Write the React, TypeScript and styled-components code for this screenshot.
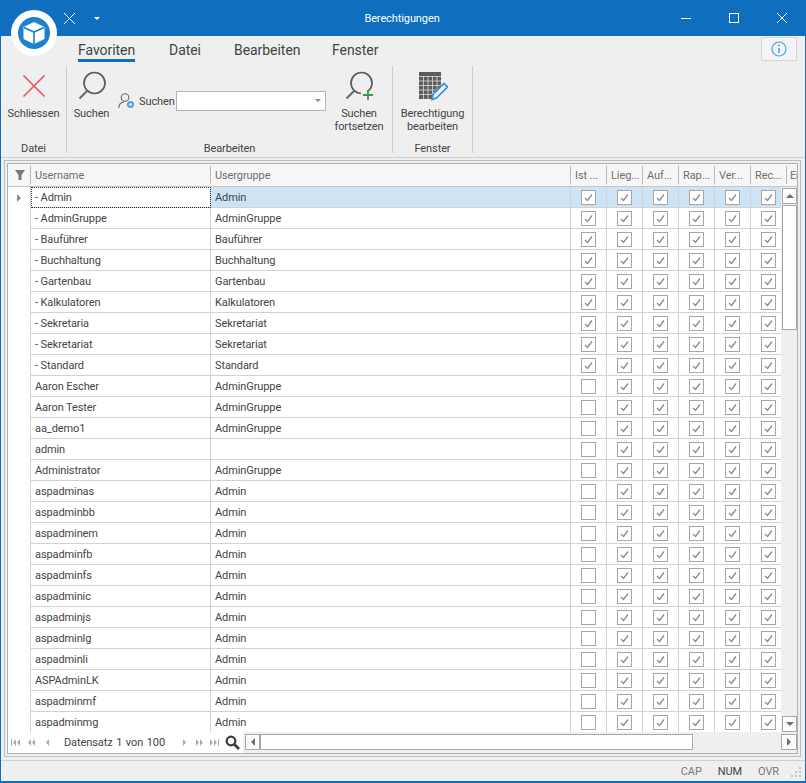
import React from "react";
import styled, { createGlobalStyle } from "styled-components";

const Global = createGlobalStyle`
  html, body { margin: 0; padding: 0; background: #efefef; }
  body { font-family: Roboto, "Noto Sans", sans-serif; font-size: 11px; letter-spacing: -0.1px; color: #444; }
  * { box-sizing: border-box; }
`;

const Win = styled.div`
  position: relative;
  width: 806px;
  height: 783px;
  display: flex;
  flex-direction: column;
  background: #efefef;
  border: 1px solid #106ebe;
  border-width: 0 1px 2px 1px;
  overflow: hidden;
`;
const TitleBar = styled.div`
  height: 36px;
  flex: none;
  background: #106ebe;
  color: #fff;
  display: grid;
  grid-template-columns: 1fr auto 1fr;
  align-items: center;
  margin: 0 -1px;
`;
const Quick = styled.div`
  display: flex;
  align-items: center;
  gap: 18px;
  padding: 0 0 0 63px;
`;
const Title = styled.div`
  text-align: center;
  padding-right: 2px;
`;
const WinBtns = styled.div`
  display: flex;
  justify-content: flex-end;
  gap: 38px;
  padding-right: 19px;
`;
const Logo = styled.div`
  position: absolute;
  left: 10px;
  top: 10px;
  width: 46px;
  height: 46px;
  border-radius: 50%;
  background: #fff;
  display: flex;
  align-items: center;
  justify-content: center;
`;
const TabsRow = styled.div`
  height: 30px;
  flex: none;
  display: flex;
  align-items: flex-start;
  padding-left: 77px;
  position: relative;
`;
const Tab = styled.div<{ $w: number; $active?: boolean }>`
  width: ${(p) => p.$w}px;
  height: 26px;
  margin-right: 34px;
  font-size: 14px;
  letter-spacing: -0.05px;
  line-height: 29px;
  color: #444;
  white-space: nowrap;
  border-bottom: 3px solid ${(p) => (p.$active ? "#106ebe" : "transparent")};
`;
const InfoBtn = styled.div`
  position: absolute;
  left: 760px;
  top: 1px;
  width: 36px;
  height: 24px;
  background: #f4f4f4;
  border: 1px solid #d6d6d6;
  border-radius: 2px;
  display: flex;
  align-items: center;
  justify-content: center;
`;
const Ribbon = styled.div`
  height: 92px;
  flex: none;
  display: flex;
  align-items: flex-start;
  border-bottom: 1px solid #d0d0d0;
`;
const Group = styled.div<{ $w: number }>`
  width: ${(p) => p.$w}px;
  height: 87px;
  flex: none;
  display: flex;
  flex-direction: column;
  border-right: 1px solid #cfcfcf;
`;
const GroupBody = styled.div`
  flex: 1;
  display: flex;
  align-items: flex-start;
  padding-top: 6px;
`;
const GroupLabel = styled.div`
  height: 12px;
  line-height: 12px;
  margin-bottom: -2px;
  text-align: center;
  color: #444;
`;
const BigBtn = styled.div<{ $w: number; $ml?: number }>`
  width: ${(p) => p.$w}px;
  margin-left: ${(p) => p.$ml ?? 0}px;
  flex: none;
  display: flex;
  flex-direction: column;
  align-items: center;
  text-align: center;
  line-height: 13px;
  color: #444;
`;
const BigIcon = styled.div`
  height: 28px;
  margin-bottom: 7px;
  display: flex;
  align-items: center;
  justify-content: center;
`;
const SearchRow = styled.div`
  width: 208px;
  flex: none;
  margin: 19px 0 0 8px;
  display: flex;
  align-items: center;
  height: 19px;
`;
const SearchLabel = styled.span`
  width: 37px;
  flex: none;
  margin-left: 4px;
  padding-top: 2px;
  line-height: 19px;
  white-space: nowrap;
`;
const Combo = styled.div`
  width: 150px;
  height: 20px;
  flex: none;
  background: #fff;
  border: 1px solid #b4b4b4;
  display: flex;
  align-items: center;
  justify-content: flex-end;
  padding-right: 4px;
`;
const Caret = styled.div<{ $c?: string }>`
  width: 0;
  height: 0;
  border-left: 3px solid transparent;
  border-right: 3px solid transparent;
  border-top: 3px solid ${(p) => p.$c ?? "#8a8a8a"};
`;
const Outer = styled.div`
  flex: 1;
  margin: 2px 4px 3px 3px;
  border: 1px solid #bdbdbd;
  padding: 2px;
  min-height: 0;
  display: flex;
`;
const Frame = styled.div`
  flex: 1;
  border: 1px solid #b0b0b0;
  background: #fff;
  display: flex;
  flex-direction: column;
  min-width: 0;
`;
const Head = styled.div`
  height: 23px;
  flex: none;
  background: #f6f6f6;
  display: grid;
  grid-template-columns: 23px 180px 360px repeat(6, 36px) 1fr;
  border-bottom: 1px solid #c6c6c6;
  overflow: hidden;
`;
const HCell = styled.div<{ $first?: boolean }>`
  color: #6f6f6f;
  padding-left: ${(p) => (p.$first ? 0 : 4)}px;
  white-space: nowrap;
  overflow: hidden;
  position: relative;
  display: flex;
  align-items: center;
  justify-content: ${(p) => (p.$first ? "center" : "flex-start")};
  &::after {
    content: "";
    position: absolute;
    right: 0;
    top: 2px;
    bottom: 2px;
    width: 1px;
    background: #b8b8b8;
  }
`;
const HLast = styled.div`
  color: #6f6f6f;
  padding-left: 3px;
  letter-spacing: -0.5px;
  white-space: nowrap;
  overflow: hidden;
  display: flex;
  align-items: center;
`;
const Middle = styled.div`
  height: 545px;
  flex: none;
  display: flex;
  overflow: hidden;
`;
const Rows = styled.div`
  width: 773px;
  flex: none;
  height: 545px;
  overflow: hidden;
`;
const Row = styled.div<{ $sel?: boolean }>`
  height: 21px;
  display: grid;
  grid-template-columns: 23px 180px 360px repeat(6, 36px);
  background: ${(p) => (p.$sel ? "#cde4f6" : "#fff")};
`;
const Cell = styled.div<{ $focus?: boolean; $plain?: boolean; $center?: boolean }>`
  height: 21px;
  padding: ${(p) => (p.$center ? "0" : "1px 0 0 4px")};
  border-right: 1px solid #d2d2d2;
  border-bottom: ${(p) => (p.$plain ? 0 : "1px solid #d2d2d2")};
  line-height: 20px;
  color: #444;
  white-space: nowrap;
  overflow: hidden;
  display: flex;
  align-items: center;
  justify-content: ${(p) => (p.$center ? "center" : "flex-start")};
  ${(p) => (p.$plain ? "background:#fff;" : "")}
  ${(p) => (p.$focus ? "background:#fff; outline: 1px dotted #333; outline-offset: -1px;" : "")}
`;
const Arrow = styled.div`
  width: 0;
  height: 0;
  border-top: 4px solid transparent;
  border-bottom: 4px solid transparent;
  border-left: 4px solid #8a8a8a;
`;
const Box = styled.div`
  width: 15px;
  height: 15px;
  background: #fff;
  border: 1px solid #a6a6a6;
  display: flex;
  align-items: center;
  justify-content: center;
`;
const VScroll = styled.div`
  width: 16px;
  flex: none;
  background: #efefef;
  display: flex;
  flex-direction: column;
  padding: 1px 0 0 1px;
`;
const SBtn = styled.div<{ $w?: number; $h?: number }>`
  width: ${(p) => p.$w ?? 15}px;
  height: ${(p) => p.$h ?? 16}px;
  flex: none;
  background: #fbfbfb;
  border: 1px solid #a8a8a8;
  display: flex;
  align-items: center;
  justify-content: center;
`;
const VThumb = styled.div`
  width: 15px;
  height: 125px;
  flex: none;
  margin-top: 1px;
  background: #fff;
  border: 1px solid #a8a8a8;
`;
const Spacer = styled.div`
  flex: 1;
`;
const Footer = styled.div`
  flex: 1;
  display: flex;
  min-height: 0;
`;
const Nav = styled.div`
  width: 235px;
  flex: none;
  display: flex;
  align-items: center;
  background: #fff;
  padding-left: 3px;
`;
const NavIcon = styled.svg<{ $ml: number }>`
  flex: none;
  display: block;
  margin-left: ${(p) => p.$ml}px;
`;
const NavText = styled.div`
  width: 100px;
  flex: none;
  margin-left: 15px;
  text-align: center;
  color: #444;
  white-space: nowrap;
  word-spacing: 1px;
`;
const Finder = styled.svg`
  flex: none;
  margin-left: 6px;
`;
const HScroll = styled.div`
  flex: 1;
  display: flex;
  align-items: center;
  background: #efefef;
  padding: 0 0 1px 2px;
`;
const HThumb = styled.div`
  width: 433px;
  height: 16px;
  flex: none;
  background: #fff;
  border: 1px solid #a8a8a8;
`;
const Status = styled.div`
  height: 21px;
  flex: none;
  border-top: 1px solid #d0d0d0;
  display: flex;
  align-items: center;
  justify-content: flex-end;
  position: relative;
  padding-right: 26px;
  gap: 16px;
`;
const StatusItem = styled.span<{ $on?: boolean }>`
  color: ${(p) => (p.$on ? "#444" : "#777")};
`;
const Grip = styled.svg`
  position: absolute;
  right: 3px;
  bottom: 3px;
`;

const data: [string, string][] = [
  ["- Admin", "Admin"],
  ["- AdminGruppe", "AdminGruppe"],
  ["- Bauführer", "Bauführer"],
  ["- Buchhaltung", "Buchhaltung"],
  ["- Gartenbau", "Gartenbau"],
  ["- Kalkulatoren", "Kalkulatoren"],
  ["- Sekretaria", "Sekretariat"],
  ["- Sekretariat", "Sekretariat"],
  ["- Standard", "Standard"],
  ["Aaron Escher", "AdminGruppe"],
  ["Aaron Tester", "AdminGruppe"],
  ["aa_demo1", "AdminGruppe"],
  ["admin", ""],
  ["Administrator", "AdminGruppe"],
  ["aspadminas", "Admin"],
  ["aspadminbb", "Admin"],
  ["aspadminem", "Admin"],
  ["aspadminfb", "Admin"],
  ["aspadminfs", "Admin"],
  ["aspadminic", "Admin"],
  ["aspadminjs", "Admin"],
  ["aspadminlg", "Admin"],
  ["aspadminli", "Admin"],
  ["ASPAdminLK", "Admin"],
  ["aspadminmf", "Admin"],
  ["aspadminmg", "Admin"],
];
const heads = ["Ist ...", "Lieg...", "Auf...", "Rap...", "Ver...", "Rec..."];

const Check = ({ on }: { on: boolean }) => (
  <Box>
    {on && (
      <svg width="11" height="11" viewBox="0 0 11 11">
        <path d="M2 6l2.500 2.500L9 2.500" fill="none" stroke="#8c8c8c" strokeWidth="1.300" />
      </svg>
    )}
  </Box>
);
const Tri = ({ d, c = "#6f6f6f" }: { d: "u" | "d" | "l" | "r"; c?: string }) => {
  const p = { u: "M1 7h8L5 3z", d: "M1 3h8L5 7z", l: "M7 1v8L3 5z", r: "M3 1v8l4-4z" }[d];
  return (
    <svg width="10" height="10" viewBox="0 0 10 10">
      <path d={p} fill={c} />
    </svg>
  );
};
const NavGlyph = ({ w, d, ml }: { w: number; d: string; ml: number }) => (
  <NavIcon width={w} height="7" viewBox={`0 0 ${w} 7`} $ml={ml}>
    <path d={d} fill="#ababab" />
  </NavIcon>
);

const Magnifier = ({ plus }: { plus?: boolean }) => (
  <svg width="30" height="30" viewBox="0 0 30 30">
    <circle cx="17.500" cy="12" r="10.500" fill="none" stroke="#5a5a5a" strokeWidth="1.700" />
    <path d="M10 20L2.500 27.500" stroke="#6a6a6a" strokeWidth="2.200" fill="none" />
    {plus && (
      <>
        <rect x="17" y="20" width="12" height="9" fill="#efefef" />
        <path d="M24 19v10M19 24h10" stroke="#2f9e50" strokeWidth="1.800" fill="none" />
      </>
    )}
  </svg>
);

export default function App() {
  return (
    <Win>
      <Global />
      <TitleBar>
        <Quick>
          <svg width="13" height="13" viewBox="0 0 13 13">
            <path d="M1 1l11 11M12 1L1 12" stroke="#fff" strokeWidth="1" fill="none" />
          </svg>
          <Caret $c="#fff" />
        </Quick>
        <Title>Berechtigungen</Title>
        <WinBtns>
          <svg width="10" height="10" viewBox="0 0 10 10">
            <path d="M0 5.500h10" stroke="#fff" fill="none" />
          </svg>
          <svg width="10" height="10" viewBox="0 0 10 10">
            <rect x=".5" y=".5" width="9" height="9" stroke="#fff" fill="none" />
          </svg>
          <svg width="10" height="10" viewBox="0 0 10 10">
            <path d="M0 0l10 10M10 0L0 10" stroke="#fff" fill="none" />
          </svg>
        </WinBtns>
      </TitleBar>
      <Logo>
        <svg width="32" height="32" viewBox="0 0 32 32">
          <circle cx="16" cy="16" r="16" fill="#1a82cf" />
          <path d="M16 5l10.500 5v12L16 27 5.500 22V10z" fill="#fff" />
          <path d="M6 10.500L16 15l10-4.500M16 15v12" stroke="#1a82cf" strokeWidth="1.600" fill="none" />
        </svg>
      </Logo>
      <TabsRow>
        <Tab $w={57} $active>Favoriten</Tab>
        <Tab $w={31}>Datei</Tab>
        <Tab $w={64}>Bearbeiten</Tab>
        <Tab $w={45}>Fenster</Tab>
        <InfoBtn>
          <svg width="16" height="16" viewBox="0 0 16 16">
            <circle cx="8" cy="8" r="7" fill="none" stroke="#4aa3df" strokeWidth="1.200" />
            <path d="M8 7v5" stroke="#4aa3df" strokeWidth="1.600" />
            <circle cx="8" cy="4.600" r="1" fill="#4aa3df" />
          </svg>
        </InfoBtn>
      </TabsRow>
      <Ribbon>
        <Group $w={66}>
          <GroupBody>
            <BigBtn $w={65}>
              <BigIcon>
                <svg width="24" height="24" viewBox="0 0 24 24">
                  <path d="M1.500 1.500l21 21M22.500 1.500l-21 21" stroke="#e8525a" strokeWidth="1.600" fill="none" />
                </svg>
              </BigIcon>
              Schliessen
            </BigBtn>
          </GroupBody>
          <GroupLabel>Datei</GroupLabel>
        </Group>
        <Group $w={326}>
          <GroupBody>
            <BigBtn $w={37} $ml={6}>
              <BigIcon><Magnifier /></BigIcon>
              Suchen
            </BigBtn>
            <SearchRow>
              <svg width="17" height="18" viewBox="0 0 17 18">
                <circle cx="7" cy="5.500" r="3.800" fill="none" stroke="#666" strokeWidth="1.100" />
                <path d="M.8 16c0-3.500 2-5.500 5-6" fill="none" stroke="#666" strokeWidth="1.100" />
                <circle cx="12.500" cy="12.500" r="3.500" fill="#4aa3df" />
                <circle cx="12.500" cy="12.500" r="1.300" fill="#fff" />
              </svg>
              <SearchLabel>Suchen</SearchLabel>
              <Combo><Caret /></Combo>
            </SearchRow>
            <BigBtn $w={52} $ml={7}>
              <BigIcon><Magnifier plus /></BigIcon>
              Suchen<br />fortsetzen
            </BigBtn>
          </GroupBody>
          <GroupLabel>Bearbeiten</GroupLabel>
        </Group>
        <Group $w={80}>
          <GroupBody>
            <BigBtn $w={79}>
              <BigIcon>
                <svg width="30" height="30" viewBox="0 0 30 30">
                  <path d="M1 1h22v20h-8v7H1z" fill="#5c5c5c" />
                  <path d="M1 5.500h22M1 10h22M1 14.500h22M1 19h17M1 23.500h14M5.500 5v23M10 5v23M14.500 5v23M19 5v16" stroke="#dcdcdc" strokeWidth=".8" fill="none" />
                  <path d="M14 28.500l1-5L26 12.500l3.500 3.500L18.500 27z" fill="#efefef" stroke="#2f8fd8" strokeWidth="1.600" />
                </svg>
              </BigIcon>
              Berechtigung<br />bearbeiten
            </BigBtn>
          </GroupBody>
          <GroupLabel>Fenster</GroupLabel>
        </Group>
      </Ribbon>
      <Outer>
        <Frame>
          <Head>
            <HCell $first>
              <svg width="10" height="10" viewBox="0 0 10 10">
                <path d="M0 0h10L6.500 5v5h-3V5z" fill="#7a7a7a" />
              </svg>
            </HCell>
            <HCell>Username</HCell>
            <HCell>Usergruppe</HCell>
            {heads.map((h) => (
              <HCell key={h}>{h}</HCell>
            ))}
            <HLast>Ei</HLast>
          </Head>
          <Middle>
            <Rows>
              {data.map(([u, g], i) => (
                <Row key={u} $sel={i === 0}>
                  <Cell $center $plain>
                    {i === 0 && <Arrow />}
                  </Cell>
                  <Cell $focus={i === 0}>{u}</Cell>
                  <Cell>{g}</Cell>
                  {heads.map((h, c) => (
                    <Cell $center key={h}>
                      <Check on={c > 0 || i < 9} />
                    </Cell>
                  ))}
                </Row>
              ))}
            </Rows>
            <VScroll>
              <SBtn><Tri d="u" /></SBtn>
              <VThumb />
              <Spacer />
              <SBtn><Tri d="d" /></SBtn>
            </VScroll>
          </Middle>
          <Footer>
            <Nav>
              <NavGlyph w={9} ml={0} d="M0 0h1v7H0zM5 0v7L2 3.500zM9 0v7L6 3.500z" />
              <NavGlyph w={7} ml={8} d="M3 0v7L0 3.500zM7 0v7L4 3.500z" />
              <NavGlyph w={3} ml={11} d="M3 0v7L0 3.500z" />
              <NavText>Datensatz 1 von 100</NavText>
              <NavGlyph w={3} ml={19} d="M0 0v7l3-3.500z" />
              <NavGlyph w={7} ml={10} d="M0 0v7l3-3.500zM4 0v7l3-3.500z" />
              <NavGlyph w={9} ml={7} d="M0 0v7l3-3.500zM4 0v7l3-3.500zM8 0h1v7H8z" />
              <Finder width="15" height="15" viewBox="0 0 15 15">
                <circle cx="6" cy="6" r="4.300" fill="none" stroke="#3c3c3c" strokeWidth="2.300" />
                <path d="M9.500 9.500L14 14" stroke="#3c3c3c" strokeWidth="2.800" />
              </Finder>
            </Nav>
            <HScroll>
              <SBtn $w={15} $h={16}><Tri d="l" /></SBtn>
              <HThumb />
              <Spacer />
              <SBtn $w={16} $h={16}><Tri d="r" /></SBtn>
            </HScroll>
          </Footer>
        </Frame>
      </Outer>
      <Status>
        <StatusItem>CAP</StatusItem>
        <StatusItem $on>NUM</StatusItem>
        <StatusItem>OVR</StatusItem>
        <Grip width="11" height="11" viewBox="0 0 11 11">
          <path d="M8 0h2v2H8zM4 4h2v2H4zM8 4h2v2H8zM0 8h2v2H0zM4 8h2v2H4zM8 8h2v2H8z" fill="#c4c4c4" />
        </Grip>
      </Status>
    </Win>
  );
}
